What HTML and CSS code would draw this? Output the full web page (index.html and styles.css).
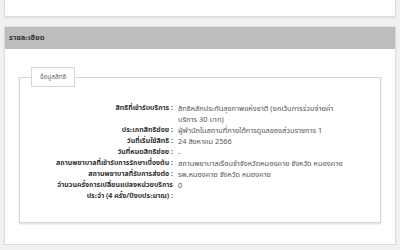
FILE: index.html
```
<!DOCTYPE html>
<html lang="th">
<head>
    <meta charset="UTF-8">
    <title>รายละเอียด</title>
    <link rel="stylesheet" href="styles.css">
</head>
<body>
    <div class="card card-top"></div>

    <div class="card panel">
        <div class="panel-head">รายละเอียด</div>
        <div class="panel-body">
            <fieldset class="group">
                <legend class="group-title">ข้อมูลสิทธิ</legend>
                <dl class="info">
                    <dt>สิทธิที่เข้ารับบริการ :</dt>
                    <dd>สิทธิหลักประกันสุขภาพแห่งชาติ (ยกเว้นการร่วมจ่ายค่าบริการ 30 บาท)</dd>

                    <dt>ประเภทสิทธิย่อย :</dt>
                    <dd>ผู้พำนักในสถานที่ภายใต้การดูแลของส่วนราชการ 1</dd>

                    <dt>วันที่เริ่มใช้สิทธิ :</dt>
                    <dd>24 สิงหาคม 2566</dd>

                    <dt>วันที่หมดสิทธิย่อย :</dt>
                    <dd>-</dd>

                    <dt>สถานพยาบาลที่เข้ารับการรักษาเบื้องต้น :</dt>
                    <dd>สถานพยาบาลเรือนจำจังหวัดหนองคาย จังหวัด หนองคาย</dd>

                    <dt>สถานพยาบาลที่รับการส่งต่อ :</dt>
                    <dd>รพ.หนองคาย จังหวัด หนองคาย</dd>

                    <dt>จำนวนครั้งการเปลี่ยนแปลงหน่วยบริการ ประจำ (4 ครั้ง/ปีงบประมาณ) :</dt>
                    <dd>0</dd>
                </dl>
            </fieldset>
        </div>
    </div>
</body>
</html>
```

FILE: styles.css
```
body {
    margin: 0;
    background: #f1f1f1;
    font-family: "Noto Sans Thai", "Noto Sans", "DejaVu Sans", sans-serif;
    font-size: 7px;
    color: #555;
}

.card {
    background: #fff;
    border: 1px solid #dcdcdc;
    box-shadow: 0 1px 2px rgba(0, 0, 0, 0.08);
    margin: 0 4px;
}

.card-top {
    height: 16px;
    border-top: none;
}

.panel {
    margin-top: 9px;
}

.panel-head {
    background: #bdbdbd;
    color: #333;
    font-size: 7.5px;
    font-weight: bold;
    height: 22px;
    line-height: 22px;
    padding: 0 4px;
}

.panel-body {
    padding: 18px 14px 21px;
}

.group {
    margin: 0;
    border: 1px solid #d6d6d6;
    box-shadow: 0 1px 2px rgba(0, 0, 0, 0.15);
    padding: 16px 32px 20px 0;
}

.group-title {
    margin-left: 11px;
    padding: 5px 8px;
    border: 1px solid #d6d6d6;
    font-size: 6.5px;
    line-height: 8px;
    color: #666;
}

.info {
    display: grid;
    grid-template-columns: 153px 1fr;
    column-gap: 5px;
    margin: 0;
    line-height: 11px;
}

.info dt {
    font-weight: bold;
    color: #333;
    text-align: right;
    padding-left: 20px;
}

.info dd {
    margin: 0;
    font-size: 7.4px;
}
```
